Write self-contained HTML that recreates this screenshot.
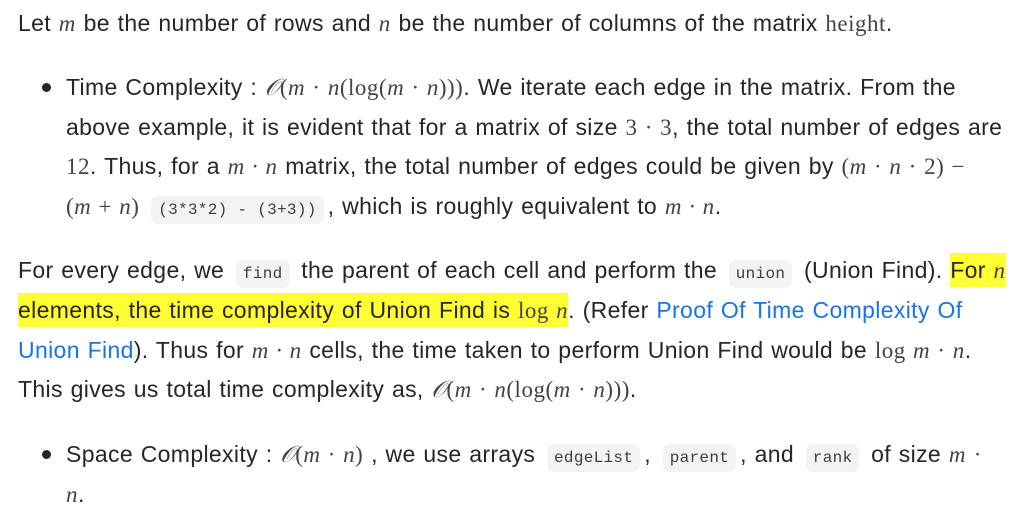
<!DOCTYPE html>
<html><head><meta charset="utf-8"><style>
body{margin:0;width:1012px;height:518px;background:#fff;overflow:hidden;font-family:"Liberation Sans",sans-serif;font-size:23px;letter-spacing:0.35px;word-spacing:1px;color:#262626;position:relative}
.l{position:absolute;white-space:nowrap;line-height:28px}
.m{font-family:"Liberation Serif",serif;font-size:23px;color:#444;letter-spacing:0.5px}
.i{font-style:italic}
code{font-family:"Liberation Mono",monospace;font-size:16px;letter-spacing:0.3px;word-spacing:0;background:#f2f3f4;border-radius:7px;padding:5px 7px;color:#3c3c43;margin:0 4px}
.b{position:absolute;left:42px;width:9px;height:9px;border-radius:50%;background:#262626}
a{color:#1a73e8;text-decoration:none}
.h{background:#ffff33;padding:4px 0}
</style></head><body>
<div class="l" style="left:18px;top:9px">Let <span class="m i">m</span> be the number of rows and <span class="m i">n</span> be the number of columns of the matrix <span class="m">height</span>.</div>
<div class="b" style="top:83px"></div>
<div class="l" style="left:66px;top:73px">Time Complexity : <span class="m"><span class="i">𝒪</span>(<span class="i">m</span> · <span class="i">n</span>(log(<span class="i">m</span> · <span class="i">n</span>)))</span>. We iterate each edge in the matrix. From the</div>
<div class="l" style="left:66px;top:113px">above example, it is evident that for a matrix of size <span class="m">3 · 3</span>, the total number of edges are</div>
<div class="l" style="left:66px;top:152px"><span class="m">12</span>. Thus, for a <span class="m i">m · n</span> matrix, the total number of edges could be given by <span class="m">(<span class="i">m</span> · <span class="i">n</span> · 2) −</span></div>
<div class="l" style="left:66px;top:192px"><span class="m">(<span class="i">m</span> + <span class="i">n</span>)</span> <code>(3*3*2) - (3+3))</code>, which is roughly equivalent to <span class="m i">m · n</span>.</div>
<div class="l" style="left:18px;top:256px">For every edge, we <code>find</code> the parent of each cell and perform the <code>union</code> (Union Find). <span class="h">For <span class="m i">n</span></span></div>
<div class="l" style="left:18px;top:296px"><span class="h">elements, the time complexity of Union Find is <span class="m">log <span class="i">n</span></span></span>. (Refer <a>Proof Of Time Complexity Of</a></div>
<div class="l" style="left:18px;top:336px"><a>Union Find</a>). Thus for <span class="m i">m · n</span> cells, the time taken to perform Union Find would be <span class="m">log <span class="i">m</span> · <span class="i">n</span></span>.</div>
<div class="l" style="left:18px;top:375px">This gives us total time complexity as, <span class="m"><span class="i">𝒪</span>(<span class="i">m</span> · <span class="i">n</span>(log(<span class="i">m</span> · <span class="i">n</span>)))</span>.</div>
<div class="b" style="top:450px"></div>
<div class="l" style="left:66px;top:440px">Space Complexity : <span class="m"><span class="i">𝒪</span>(<span class="i">m</span> · <span class="i">n</span>)</span> , we use arrays <code>edgeList</code>, <code>parent</code>, and <code>rank</code> of size <span class="m i">m</span> <span class="m">·</span></div>
<div class="l" style="left:66px;top:480px"><span class="m i">n</span>.</div>
</body></html>
